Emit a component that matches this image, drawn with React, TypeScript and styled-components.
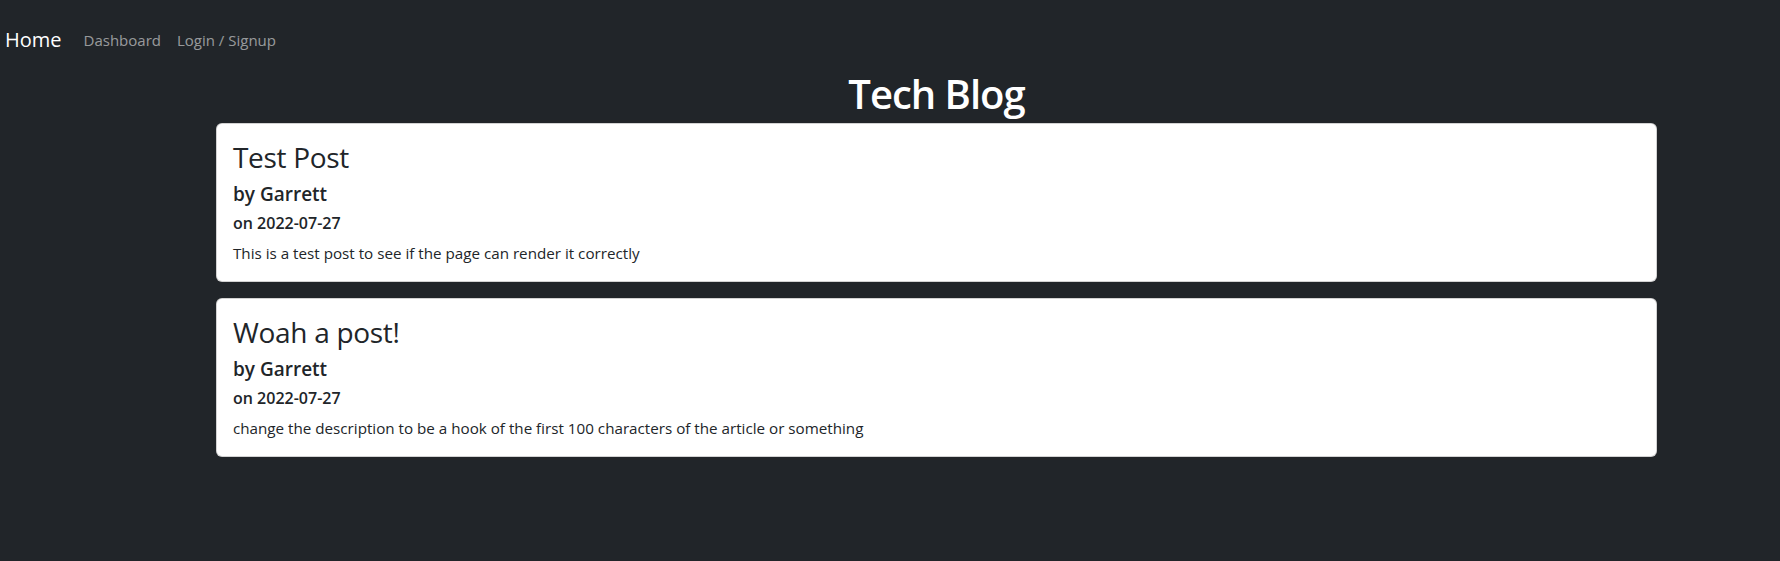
import styled, { createGlobalStyle } from "styled-components";

const GlobalStyle = createGlobalStyle`
  html, body {
    margin: 0;
    padding: 0;
    background: #212529;
  }

  body {
    font-family: "Open Sans", "Noto Sans", "Liberation Sans", sans-serif;
    color: #212529;
    min-height: 100vh;
  }

  * {
    box-sizing: border-box;
  }
`;

interface Post {
  title: string;
  author: string;
  date: string;
  description: string;
}

const POSTS: Post[] = [
  {
    title: "Test Post",
    author: "Garrett",
    date: "2022-07-27",
    description: "This is a test post to see if the page can render it correctly",
  },
  {
    title: "Woah a post!",
    author: "Garrett",
    date: "2022-07-27",
    description:
      "change the description to be a hook of the first 100 characters of the article or something",
  },
];

const NavBar = styled.nav`
  display: flex;
  align-items: center;
  padding: 25px 0 12px 5px;
`;

const Brand = styled.a`
  font-size: 20px;
  line-height: 30px;
  color: #fff;
  margin-right: 14px;
  text-decoration: none;
`;

const NavLink = styled.a`
  font-size: 15px;
  line-height: 24px;
  padding: 0 8px;
  color: rgba(255, 255, 255, 0.55);
  text-decoration: none;
`;

const Main = styled.main`
  width: 1441px;
  margin-left: 216px;
`;

const Title = styled.h1`
  margin: 3px 0 5px;
  font-size: 40px;
  line-height: 48px;
  font-weight: 600;
  letter-spacing: -1px;
  color: #fff;
  text-align: center;
`;

const CardList = styled.div`
  display: flex;
  flex-direction: column;
  gap: 16px;
`;

const Card = styled.article`
  background: #fff;
  border: 1px solid rgba(0, 0, 0, 0.175);
  border-radius: 6px;
  padding: 16px;
`;

const PostTitle = styled.h3`
  margin: 0 0 8px;
  font-size: 28px;
  line-height: 34px;
  font-weight: 500;
  letter-spacing: -0.3px;
  color: #212529;
`;

const Author = styled.h5`
  margin: 0 0 7px;
  font-size: 19px;
  line-height: 24px;
  font-weight: 600;
  color: #212529;
`;

const PostDate = styled.h6`
  margin: 0 0 8px;
  font-size: 16px;
  line-height: 20px;
  font-weight: 600;
  color: #212529;
`;

const Description = styled.p`
  margin: 0;
  font-size: 15.2px;
  line-height: 24px;
  color: #212529;
`;

export default function App() {
  return (
    <>
      <GlobalStyle />
      <NavBar>
        <Brand href="#">Home</Brand>
        <NavLink href="#">Dashboard</NavLink>
        <NavLink href="#">Login / Signup</NavLink>
      </NavBar>
      <Main>
        <Title>Tech Blog</Title>
        <CardList>
          {POSTS.map((post) => (
            <Card key={post.title}>
              <PostTitle>{post.title}</PostTitle>
              <Author>by {post.author}</Author>
              <PostDate>on {post.date}</PostDate>
              <Description>{post.description}</Description>
            </Card>
          ))}
        </CardList>
      </Main>
    </>
  );
}
